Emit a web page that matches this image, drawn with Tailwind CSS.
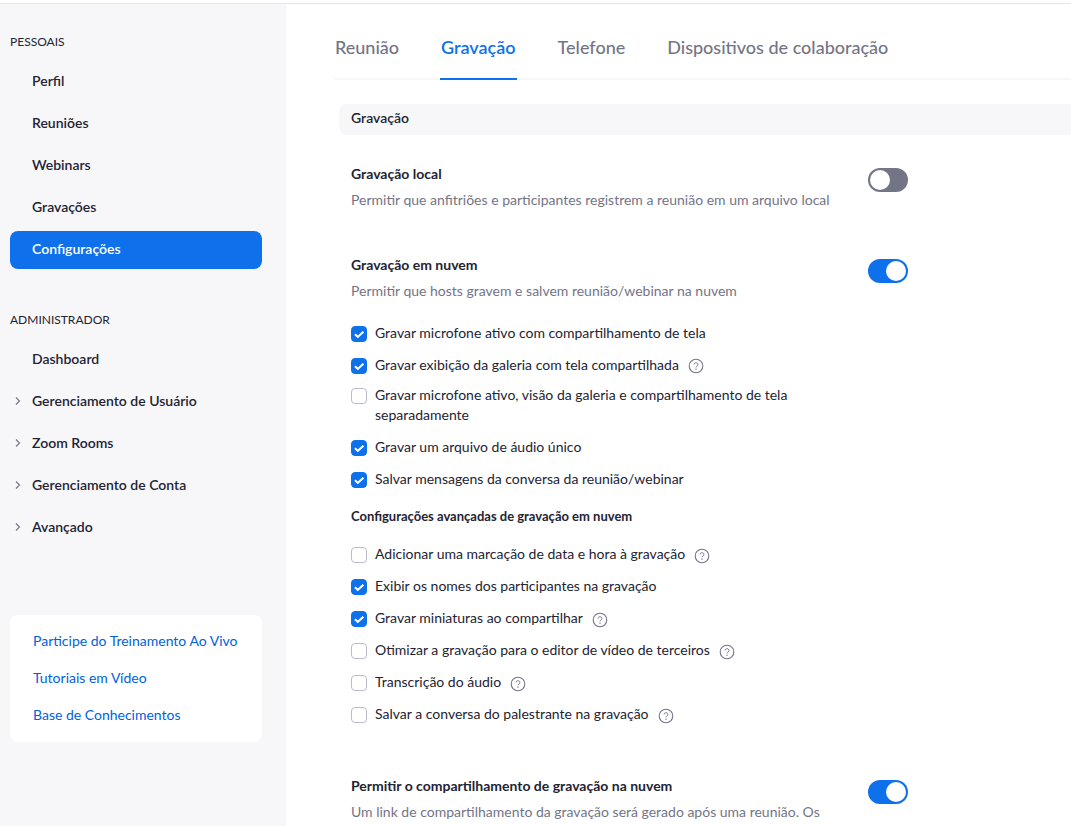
<!DOCTYPE html>
<html lang="pt-BR">
<head>
<meta charset="utf-8">
<meta name="viewport" content="width=device-width, initial-scale=1">
<title>Configurações de gravação</title>
<script src="https://cdn.jsdelivr.net/npm/@tailwindcss/browser@4"></script>
</head>
<body class="flex min-h-screen flex-col bg-white pt-[3px] font-['Lato','Open_Sans',sans-serif] text-sm/5 text-[#232333]">
<svg class="hidden" aria-hidden="true">
  <symbol id="help" viewBox="0 0 16 16"><circle cx="8" cy="8" r="6.8" fill="none" stroke="currentColor" stroke-width="1.1"/><path d="M6.1 6.5c0-1.1.8-1.8 1.9-1.8s1.9.7 1.9 1.7c0 .8-.4 1.1-1 1.6-.6.4-.9.7-.9 1.4" fill="none" stroke="currentColor" stroke-width="1"/><circle cx="8" cy="11.2" r=".7" fill="currentColor"/></symbol>
  <symbol id="check" viewBox="0 0 16 16"><path d="M4 8.3l2.8 2.6 5.6-5.2" fill="none" stroke="currentColor" stroke-width="2.1"/></symbol>
  <symbol id="chevron" viewBox="0 0 8 10"><path d="M2 1.5L5.5 5 2 8.5" fill="none" stroke="currentColor" stroke-width="1.1"/></symbol>
</svg>
<div class="flex grow border-t border-[#e6e6ea]">
  <aside class="w-[286px] shrink-0 bg-[#f7f7fa] pr-6 pl-2.5 pt-7">
    <nav aria-label="Pessoais">
      <h2 class="text-xs/5">PESSOAIS</h2>
      <ul class="mt-[11px] flex flex-col gap-1 font-semibold">
        <li><a href="#" class="block rounded-lg px-[22px] pt-2 pb-2.5">Perfil</a></li>
        <li><a href="#" class="block rounded-lg px-[22px] pt-2 pb-2.5">Reuniões</a></li>
        <li><a href="#" class="block rounded-lg px-[22px] pt-2 pb-2.5">Webinars</a></li>
        <li><a href="#" class="block rounded-lg px-[22px] pt-2 pb-2.5">Gravações</a></li>
        <li><a href="#" aria-current="page" class="block rounded-lg bg-[#0e71eb] px-[22px] pt-2 pb-2.5 text-white">Configurações</a></li>
      </ul>
    </nav>
    <nav aria-label="Administrador" class="mt-[41px]">
      <h2 class="text-xs/5">ADMINISTRADOR</h2>
      <ul class="mt-[11px] flex flex-col gap-1 font-semibold">
        <li><a href="#" class="block px-[22px] pt-2 pb-2.5">Dashboard</a></li>
        <li><a href="#" class="flex items-center gap-2.5 pt-2 pb-2.5 pl-1"><svg class="h-2.5 w-2 text-[#747487]" aria-hidden="true"><use href="#chevron"/></svg>Gerenciamento de Usuário</a></li>
        <li><a href="#" class="flex items-center gap-2.5 pt-2 pb-2.5 pl-1"><svg class="h-2.5 w-2 text-[#747487]" aria-hidden="true"><use href="#chevron"/></svg>Zoom Rooms</a></li>
        <li><a href="#" class="flex items-center gap-2.5 pt-2 pb-2.5 pl-1"><svg class="h-2.5 w-2 text-[#747487]" aria-hidden="true"><use href="#chevron"/></svg>Gerenciamento de Conta</a></li>
        <li><a href="#" class="flex items-center gap-2.5 pt-2 pb-2.5 pl-1"><svg class="h-2.5 w-2 text-[#747487]" aria-hidden="true"><use href="#chevron"/></svg>Avançado</a></li>
      </ul>
    </nav>
    <ul class="mt-[68px] flex flex-col gap-[17px] rounded-lg bg-white px-[23px] pt-4 pb-[17px] text-[#0061e0]">
      <li><a href="#" class="whitespace-nowrap">Participe do Treinamento Ao Vivo</a></li>
      <li><a href="#">Tutoriais em Vídeo</a></li>
      <li><a href="#">Base de Conhecimentos</a></li>
    </ul>
  </aside>

  <main class="min-w-0 grow pl-12">
    <nav aria-label="Configurações" class="flex gap-10 border-b-2 border-[#f7f7fa] pt-[31px] text-lg/6 font-medium text-[#747487]">
      <a href="#" class="-mb-0.5 border-b-2 border-transparent px-px pb-[19px]">Reunião</a>
      <a href="#" aria-current="page" class="-mb-0.5 border-b-2 border-[#0e71eb] px-px pb-[19px] font-semibold text-[#0e71eb]">Gravação</a>
      <a href="#" class="-mb-0.5 border-b-2 border-transparent px-px pb-[19px]">Telefone</a>
      <a href="#" class="-mb-0.5 border-b-2 border-transparent px-px pb-[19px]">Dispositivos de colaboração</a>
    </nav>

    <h1 class="mt-6 ml-[5px] rounded-l-lg bg-[#f7f7fa] px-3 pt-1 pb-[7px] font-semibold">Gravação</h1>

    <section class="mt-[29px] flex gap-[37px] pl-[17px]">
      <div class="w-[480px]">
        <h2 class="font-bold"><label for="local">Gravação local</label></h2>
        <p class="mt-1.5 text-[#747487]">Permitir que anfitriões e participantes registrem a reunião em um arquivo local</p>
      </div>
      <input id="local" type="checkbox" role="switch" class="mt-1 h-6 w-10 shrink-0 appearance-none rounded-full bg-[#747487] p-0.5 before:block before:size-5 before:rounded-full before:bg-white checked:bg-[#0e71eb] checked:before:ml-4">
    </section>

    <section class="mt-[45px] flex gap-[37px] pl-[17px]">
      <div class="w-[480px]">
        <h2 class="font-bold"><label for="cloud">Gravação em nuvem</label></h2>
        <p class="mt-1.5 text-[#747487]">Permitir que hosts gravem e salvem reunião/webinar na nuvem</p>
        <ul class="mt-[22px] flex flex-col gap-3">
          <li class="flex items-start gap-2">
            <span class="mt-[3px] grid size-4 shrink-0"><input id="c1" type="checkbox" checked class="peer col-start-1 row-start-1 size-4 appearance-none rounded border border-[#babacc] bg-white checked:border-[#0e71eb] checked:bg-[#0e71eb]"><svg class="pointer-events-none invisible col-start-1 row-start-1 size-4 text-white peer-checked:visible" aria-hidden="true"><use href="#check"/></svg></span>
            <label for="c1">Gravar microfone ativo com compartilhamento de tela</label>
          </li>
          <li class="-mb-0.5 flex items-start gap-2">
            <span class="mt-[3px] grid size-4 shrink-0"><input id="c2" type="checkbox" checked class="peer col-start-1 row-start-1 size-4 appearance-none rounded border border-[#babacc] bg-white checked:border-[#0e71eb] checked:bg-[#0e71eb]"><svg class="pointer-events-none invisible col-start-1 row-start-1 size-4 text-white peer-checked:visible" aria-hidden="true"><use href="#check"/></svg></span>
            <label for="c2">Gravar exibição da galeria com tela compartilhada</label>
            <button type="button" aria-label="Ajuda" class="mt-[3px] ml-px text-[#747487]"><svg class="size-4"><use href="#help"/></svg></button>
          </li>
          <li class="flex items-start gap-2">
            <span class="mt-[3px] grid size-4 shrink-0"><input id="c3" type="checkbox" class="peer col-start-1 row-start-1 size-4 appearance-none rounded border border-[#babacc] bg-white checked:border-[#0e71eb] checked:bg-[#0e71eb]"><svg class="pointer-events-none invisible col-start-1 row-start-1 size-4 text-white peer-checked:visible" aria-hidden="true"><use href="#check"/></svg></span>
            <label for="c3">Gravar microfone ativo, visão da galeria e compartilhamento de tela separadamente</label>
          </li>
          <li class="flex items-start gap-2">
            <span class="mt-[3px] grid size-4 shrink-0"><input id="c4" type="checkbox" checked class="peer col-start-1 row-start-1 size-4 appearance-none rounded border border-[#babacc] bg-white checked:border-[#0e71eb] checked:bg-[#0e71eb]"><svg class="pointer-events-none invisible col-start-1 row-start-1 size-4 text-white peer-checked:visible" aria-hidden="true"><use href="#check"/></svg></span>
            <label for="c4">Gravar um arquivo de áudio único</label>
          </li>
          <li class="flex items-start gap-2">
            <span class="mt-[3px] grid size-4 shrink-0"><input id="c5" type="checkbox" checked class="peer col-start-1 row-start-1 size-4 appearance-none rounded border border-[#babacc] bg-white checked:border-[#0e71eb] checked:bg-[#0e71eb]"><svg class="pointer-events-none invisible col-start-1 row-start-1 size-4 text-white peer-checked:visible" aria-hidden="true"><use href="#check"/></svg></span>
            <label for="c5">Salvar mensagens da conversa da reunião/webinar</label>
          </li>
        </ul>
        <h3 class="mt-[17px] text-[13px]/5 font-bold">Configurações avançadas de gravação em nuvem</h3>
        <ul class="mt-[18px] flex flex-col gap-3">
          <li class="flex items-start gap-2">
            <span class="mt-[3px] grid size-4 shrink-0"><input id="a1" type="checkbox" class="peer col-start-1 row-start-1 size-4 appearance-none rounded border border-[#babacc] bg-white checked:border-[#0e71eb] checked:bg-[#0e71eb]"><svg class="pointer-events-none invisible col-start-1 row-start-1 size-4 text-white peer-checked:visible" aria-hidden="true"><use href="#check"/></svg></span>
            <label for="a1">Adicionar uma marcação de data e hora à gravação</label>
            <button type="button" aria-label="Ajuda" class="mt-1 ml-px text-[#747487]"><svg class="size-4"><use href="#help"/></svg></button>
          </li>
          <li class="flex items-start gap-2">
            <span class="mt-[3px] grid size-4 shrink-0"><input id="a2" type="checkbox" checked class="peer col-start-1 row-start-1 size-4 appearance-none rounded border border-[#babacc] bg-white checked:border-[#0e71eb] checked:bg-[#0e71eb]"><svg class="pointer-events-none invisible col-start-1 row-start-1 size-4 text-white peer-checked:visible" aria-hidden="true"><use href="#check"/></svg></span>
            <label for="a2">Exibir os nomes dos participantes na gravação</label>
          </li>
          <li class="flex items-start gap-2">
            <span class="mt-[3px] grid size-4 shrink-0"><input id="a3" type="checkbox" checked class="peer col-start-1 row-start-1 size-4 appearance-none rounded border border-[#babacc] bg-white checked:border-[#0e71eb] checked:bg-[#0e71eb]"><svg class="pointer-events-none invisible col-start-1 row-start-1 size-4 text-white peer-checked:visible" aria-hidden="true"><use href="#check"/></svg></span>
            <label for="a3">Gravar miniaturas ao compartilhar</label>
            <button type="button" aria-label="Ajuda" class="mt-1 ml-px text-[#747487]"><svg class="size-4"><use href="#help"/></svg></button>
          </li>
          <li class="flex items-start gap-2">
            <span class="mt-[3px] grid size-4 shrink-0"><input id="a4" type="checkbox" class="peer col-start-1 row-start-1 size-4 appearance-none rounded border border-[#babacc] bg-white checked:border-[#0e71eb] checked:bg-[#0e71eb]"><svg class="pointer-events-none invisible col-start-1 row-start-1 size-4 text-white peer-checked:visible" aria-hidden="true"><use href="#check"/></svg></span>
            <label for="a4">Otimizar a gravação para o editor de vídeo de terceiros</label>
            <button type="button" aria-label="Ajuda" class="mt-1 ml-px text-[#747487]"><svg class="size-4"><use href="#help"/></svg></button>
          </li>
          <li class="flex items-start gap-2">
            <span class="mt-[3px] grid size-4 shrink-0"><input id="a5" type="checkbox" class="peer col-start-1 row-start-1 size-4 appearance-none rounded border border-[#babacc] bg-white checked:border-[#0e71eb] checked:bg-[#0e71eb]"><svg class="pointer-events-none invisible col-start-1 row-start-1 size-4 text-white peer-checked:visible" aria-hidden="true"><use href="#check"/></svg></span>
            <label for="a5">Transcrição do áudio</label>
            <button type="button" aria-label="Ajuda" class="mt-1 ml-px text-[#747487]"><svg class="size-4"><use href="#help"/></svg></button>
          </li>
          <li class="flex items-start gap-2">
            <span class="mt-[3px] grid size-4 shrink-0"><input id="a6" type="checkbox" class="peer col-start-1 row-start-1 size-4 appearance-none rounded border border-[#babacc] bg-white checked:border-[#0e71eb] checked:bg-[#0e71eb]"><svg class="pointer-events-none invisible col-start-1 row-start-1 size-4 text-white peer-checked:visible" aria-hidden="true"><use href="#check"/></svg></span>
            <label for="a6">Salvar a conversa do palestrante na gravação</label>
            <button type="button" aria-label="Ajuda" class="mt-1 ml-px text-[#747487]"><svg class="size-4"><use href="#help"/></svg></button>
          </li>
        </ul>
      </div>
      <input id="cloud" type="checkbox" role="switch" checked class="mt-1 h-6 w-10 shrink-0 appearance-none rounded-full bg-[#747487] p-0.5 before:block before:size-5 before:rounded-full before:bg-white checked:bg-[#0e71eb] checked:before:ml-4">
    </section>

    <section class="mt-[52px] flex gap-[37px] pl-[17px]">
      <div class="w-[480px]">
        <h2 class="font-bold"><label for="share">Permitir o compartilhamento de gravação na nuvem</label></h2>
        <p class="mt-1.5 text-[#747487]">Um link de compartilhamento da gravação será gerado após uma reunião. Os</p>
      </div>
      <input id="share" type="checkbox" role="switch" checked class="mt-1 h-6 w-10 shrink-0 appearance-none rounded-full bg-[#747487] p-0.5 before:block before:size-5 before:rounded-full before:bg-white checked:bg-[#0e71eb] checked:before:ml-4">
    </section>
  </main>
</div>
</body>
</html>
